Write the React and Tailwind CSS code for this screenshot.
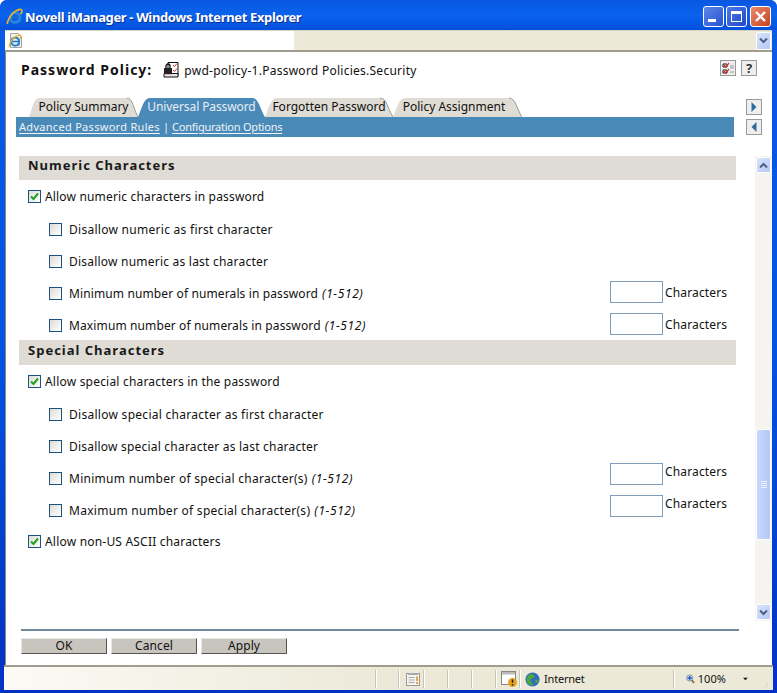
import React from "react";

const F = "font-['Noto_Sans','DejaVu_Sans',sans-serif]";

function Chevron({ up }) {
  return (
    <svg width="9" height="7" viewBox="0 0 9 7">
      <path d={up ? "M1 5.5 L4.5 2 L8 5.5" : "M1 1.5 L4.5 5 L8 1.5"} fill="none" stroke="#4d6185" strokeWidth="2" />
    </svg>
  );
}

function ScrollBtn({ up, className = "h-[16px]" }) {
  return (
    <div className={`w-[15px] rounded-[2px] border border-white bg-gradient-to-br from-[#dbe5fb] to-[#b4c8f6] flex items-center justify-center ${className}`}>
      <Chevron up={up} />
    </div>
  );
}

function IeGlyph() {
  return (
    <>
      <circle cx="8.5" cy="9" r="4.6" fill="none" stroke="#2a86d8" strokeWidth="2.6" />
      <path d="M5 8.8h7.5" stroke="#1c6fc4" strokeWidth="1.8" />
      <path d="M11 12.5h2.8" stroke="#2a86d8" strokeWidth="2" />
      <path d="M1.2 15C1.5 10 7 2.5 13 1.3c2.5-.4 2.6 2 .8 4.6" fill="none" stroke="#e8b22e" strokeWidth="1.5" />
    </>
  );
}

function IeIcon() {
  return (
    <svg width="17" height="17" viewBox="0 0 16 16">
      <IeGlyph />
    </svg>
  );
}

function IePageIcon() {
  return (
    <svg width="15" height="16" viewBox="0 0 15 16">
      <path d="M2.5 .5h8l3 3v11h-11z" fill="#f4f2ea" stroke="#a8a69c" />
      <g transform="translate(0 1) scale(.85)">
        <IeGlyph />
      </g>
    </svg>
  );
}

function Tab({ label, active, w, className = "" }) {
  return (
    <div className={`relative h-[20px] flex items-center justify-center ${w} ${className}`}>
      <svg className="absolute left-0 top-0 h-[20px] w-full" viewBox="0 0 100 20" preserveAspectRatio="none">
        <path d="M0 20 C3 12 4 2 9 1 L90 1 C95 1 96 12 100 20 Z" fill={active ? "#4a8ab8" : "#dfdcd5"} />
        {!active && (
          <path d="M90 1 C95 1 96 12 100 20" fill="none" stroke="#9c9a94" strokeWidth="1" vectorEffect="non-scaling-stroke" />
        )}
      </svg>
      <span className={`relative text-[12px] pb-[1px] ${active ? "text-[#e8eef4] tracking-[-0.1px]" : "text-[#111]"}`}>{label}</span>
    </div>
  );
}

function Section({ title, className = "h-[24px] pb-[4px]" }) {
  return (
    <div className={`bg-[#dfdcd5] pl-[9px] flex items-center text-[13px] font-bold tracking-[1px] text-[#1a1a1a] ${className}`}>
      {title}
    </div>
  );
}

function Box({ checked }) {
  return (
    <span className="w-[13px] h-[13px] mb-[2px] shrink-0 border border-[#1c5180] bg-gradient-to-br from-[#dcdcd7] to-white flex items-center justify-center">
      {checked && (
        <svg width="9" height="9" viewBox="0 0 9 9">
          <path d="M1 4.5 L3.5 7 L8 1.5" fill="none" stroke="#21a121" strokeWidth="2" />
        </svg>
      )}
    </span>
  );
}

function Row({ label, hint, indent, checked, input, track = "tracking-[0.28px]", className = "" }) {
  return (
    <div className={`flex items-center h-[20px] ${indent ? "pl-[30px]" : "pl-[9px]"} ${className}`}>
      <Box checked={checked} />
      <span className={`text-[12px] text-[#111] ${track} ${indent ? "ml-[7px]" : "ml-[4px]"}`}>
        {label}
        {hint && <em className="ml-[4px] tracking-[0.6px]">{hint}</em>}
      </span>
      {input === "a" && (
        <div className="ml-auto flex items-start w-[126px] h-[22px] mb-[4px]">
          <span className="w-[53px] h-[22px] border border-[#7f9db9] bg-white shrink-0" />
          <span className="ml-[2px] mt-[2px] text-[12px] tracking-[0.15px] text-[#111] leading-[20px]">Characters</span>
        </div>
      )}
      {input === "b" && (
        <div className="ml-auto flex items-start w-[126px] h-[22px] mb-[10px]">
          <span className="w-[53px] h-[22px] border border-[#7f9db9] bg-white shrink-0" />
          <span className="ml-[2px] text-[12px] tracking-[0.15px] text-[#111] leading-[18px]">Characters</span>
        </div>
      )}
    </div>
  );
}

function Btn({ children }) {
  return (
    <button className="w-[86px] h-[16px] bg-[#c8c5bf] border border-b-[#55544f] border-r-[#55544f] border-t-[#e8e6e1] border-l-[#e8e6e1] text-[12px] leading-[14px] text-[#111] tracking-[0.1px]">
      {children}
    </button>
  );
}

function Cell({ w, children, className = "" }) {
  return (
    <div className={`h-[18px] border-l border-[#c9c5b4] shadow-[inset_1px_0_0_#fff] flex items-center shrink-0 ${w} ${className}`}>
      {children}
    </div>
  );
}

export default function App() {
  return (
    <div className={`w-[777px] h-[693px] flex flex-col overflow-hidden rounded-t-[7px] bg-gradient-to-b from-[#0a5be6] via-[#0054e3] to-[#0331c4] ${F}`}>
      {/* title bar */}
      <div className="h-[30px] shrink-0 flex items-center pl-[6px] pr-[6px] bg-gradient-to-b from-[#0a57e0] via-[#0a63ee] to-[#0350dc]">
        <span className="mt-[2px]"><IeIcon /></span>
        <span className="ml-[2px] mt-[5px] text-[13px] font-bold text-white tracking-[-0.36px] [text-shadow:1px_1px_0_#0f2f8f]">
          Novell iManager - Windows Internet Explorer
        </span>
        <div className="ml-auto mt-[2px] flex gap-[2px]">
          <div className="w-[21px] h-[21px] rounded-[3px] border border-white bg-gradient-to-br from-[#5c86e8] to-[#2a52d0] flex items-end pl-[4px] pb-[4px]">
            <span className="w-[8px] h-[3px] bg-white" />
          </div>
          <div className="w-[21px] h-[21px] rounded-[3px] border border-white bg-gradient-to-br from-[#4a78e6] to-[#2348cc] flex items-center justify-center">
            <span className="w-[11px] h-[11px] border border-t-[3px] border-white" />
          </div>
          <div className="ml-[1px] w-[21px] h-[21px] rounded-[3px] border border-white bg-gradient-to-br from-[#e88a6a] to-[#c8401c] flex items-center justify-center">
            <svg width="13" height="13" viewBox="0 0 13 13">
              <path d="M2 2 L11 11 M11 2 L2 11" stroke="white" strokeWidth="2.4" />
            </svg>
          </div>
        </div>
      </div>

      {/* address bar */}
      <div className="h-[22px] shrink-0 ml-[5px] mr-[5px] bg-[#ece9d8] border-t border-[#d6d3c4] border-b-2 border-b-[#a09d8f] flex">
        <div className="w-[289px] bg-white flex items-center pl-[3px]">
          <IePageIcon />
        </div>
        <div className="ml-auto pr-[1px] flex items-center">
          <ScrollBtn className="h-[18px]" />
        </div>
      </div>

      {/* page */}
      <div className="flex-1 min-h-0 ml-[5px] mr-[5px] bg-white border-l border-[#8a887c] flex flex-col">
        {/* heading */}
        <div className="h-[45px] shrink-0 flex pt-[8px] pl-[15px] pr-[15px]">
          <span className="text-[14px] font-bold tracking-[1px] text-[#111] leading-[20px]">Password Policy:</span>
          <svg className="ml-[11px] mt-[2px]" width="16" height="16" viewBox="0 0 16 16">
            <path d="M5 .5h10v13H5z" fill="#fff" stroke="#111" />
            <path d="M1 11.5h14v3.5H1z" fill="#e8e8e8" stroke="#111" />
            <path d="M2 11.5h7" stroke="#d22" strokeWidth="1.4" />
            <rect x="1" y="6" width="8" height="6" fill="#222" />
            <path d="M3 6V4a2 2 0 0 1 4 0v2" fill="none" stroke="#111" strokeWidth="1.3" />
            <path d="M10 3l1.5 1.5L14 1.5M10 8l1.5 1.5L14 6.5" stroke="#d22" fill="none" />
          </svg>
          <span className="ml-[5px] text-[12px] tracking-[0.26px] text-[#111] leading-[21px]">pwd-policy-1.Password Policies.Security</span>
          <div className="ml-auto flex gap-[5px]">
            <div className="w-[16px] h-[16px] border border-[#999] bg-[#eee] flex items-center justify-center">
              <svg width="13" height="13" viewBox="0 0 13 13">
                <path d="M1 2h4v3H1zM1 8h4v3H1z" fill="none" stroke="#222" />
                <path d="M2 3l2 2 3-4M2 9l2 2 3-4" fill="none" stroke="#d8281c" strokeWidth="1.2" />
                <path d="M8 4h4M8 6h4M8 10h4" stroke="#999" />
              </svg>
            </div>
            <div className="w-[16px] h-[16px] border border-[#999] bg-[#eee] flex items-center justify-center text-[13px] font-bold leading-none text-[#333]">?</div>
          </div>
        </div>

        {/* tabs + nav */}
        <div className="h-[40px] shrink-0 flex pl-[10px] pr-[9px]">
          <div className="w-[718px] flex flex-col">
            <div className="h-[20px] flex pl-[13px]">
              <Tab label="Policy Summary" w="w-[109px]" />
              <Tab label="Universal Password" active w="w-[127px]" />
              <Tab label="Forgotten Password" w="w-[128px]" />
              <Tab label="Policy Assignment" w="w-[129px]" className="pr-[7px]" />
            </div>
            <div className="h-[20px] bg-[#4a8ab8] flex items-center pl-[3px] text-[11px] text-[#eef3f7]">
              <span className="underline underline-offset-2 tracking-[0.3px]">Advanced Password Rules</span>
              <span className="mx-[3px]">|</span>
              <span className="underline underline-offset-2 tracking-[-0.23px]">Configuration Options</span>
            </div>
          </div>
          <div className="ml-[12px] flex flex-col gap-[4px] mt-[2px]">
            <div className="w-[16px] h-[16px] border border-[#999] bg-[#eee] flex items-center justify-center">
              <svg width="8" height="12" viewBox="0 0 8 12"><path d="M1.5 1 L6.5 6 L1.5 11Z" fill="#2c6ba0" /></svg>
            </div>
            <div className="w-[16px] h-[16px] border border-[#999] bg-[#eee] flex items-center justify-center">
              <svg width="8" height="12" viewBox="0 0 8 12"><path d="M6.5 1 L1.5 6 L6.5 11Z" fill="#2c6ba0" /></svg>
            </div>
          </div>
        </div>

        {/* scroll area */}
        <div className="h-[465px] shrink-0 mt-[19px] flex">
          <div className="flex-1 pl-[13px]">
            <div className="w-[717px]">
              <Section title="Numeric Characters" />
              <Row label="Allow numeric characters in password" track="tracking-[0.17px]" checked className="mt-[7px]" />
              <Row label="Disallow numeric as first character" indent className="mt-[13px]" />
              <Row label="Disallow numeric as last character" track="tracking-[0.22px]" indent className="mt-[12px]" />
              <Row label="Minimum number of numerals in password" track="tracking-[0.12px]" hint="(1-512)" indent input="a" className="mt-[12px]" />
              <Row label="Maximum number of numerals in password" track="tracking-[0.12px]" hint="(1-512)" indent input="a" className="mt-[12px]" />
              <Section title="Special Characters" className="mt-[4px] h-[25px] pb-[3px]" />
              <Row label="Allow special characters in the password" track="tracking-[0.2px]" checked className="mt-[7px]" />
              <Row label="Disallow special character as first character" indent className="mt-[13px]" />
              <Row label="Disallow special character as last character" track="tracking-[0.21px]" indent className="mt-[12px]" />
              <Row label="Minimum number of special character(s)" hint="(1-512)" indent input="b" className="mt-[12px]" />
              <Row label="Maximum number of special character(s)" hint="(1-512)" indent input="b" className="mt-[12px]" />
              <Row label="Allow non-US ASCII characters" track="tracking-[0.2px]" checked className="mt-[11px]" />
            </div>
          </div>
          <div className="w-[17px] shrink-0 bg-[#f5f4ef] flex flex-col items-center pt-[1px] pb-[1px]">
            <ScrollBtn up />
            <div className="flex-1 flex flex-col justify-end pb-[64px]">
              <div className="w-[15px] h-[111px] rounded-[2px] border border-white bg-gradient-to-r from-[#c9d8fb] to-[#b4c8f6] flex flex-col items-center justify-center gap-[1px]">
                <span className="w-[6px] h-[1px] bg-[#eef3fe]" />
                <span className="w-[6px] h-[1px] bg-[#eef3fe]" />
                <span className="w-[6px] h-[1px] bg-[#eef3fe]" />
                <span className="w-[6px] h-[1px] bg-[#eef3fe]" />
              </div>
            </div>
            <ScrollBtn />
          </div>
        </div>

        {/* footer */}
        <div className="flex-1 min-h-0 pl-[15px] pt-[8px] bg-white">
          <div className="w-[718px] h-[2px] bg-[#6f8b9d]" />
          <div className="mt-[7px] flex gap-[4px]">
            <Btn>OK</Btn>
            <Btn>Cancel</Btn>
            <Btn>Apply</Btn>
          </div>
        </div>
      </div>

      {/* status bar */}
      <div className="h-[25px] shrink-0 ml-[4px] mr-[4px] mb-[3px] border-t-2 border-[#a09d8f] bg-gradient-to-r from-[#fbfaf5] via-[#ece9d8] to-[#ece9d8] flex items-center pl-[371px] pt-[1px]">
        <Cell w="w-[23px]" />
        <Cell w="w-[25px]" className="pl-[7px]">
          <svg width="14" height="13" viewBox="0 0 14 13">
            <rect x=".5" y=".5" width="13" height="12" fill="#f5f4ef" stroke="#999" />
            <path d="M2 1h10" stroke="#aaa" strokeWidth="2" />
            <path d="M2.5 4.5h6M2.5 7h6M2.5 9.5h6" stroke="#aaa" />
            <path d="M11 3.5v4.5M11 9v2" stroke="#e08a1c" strokeWidth="1.5" />
          </svg>
        </Cell>
        <Cell w="w-[24px]" />
        <Cell w="w-[24px]" />
        <Cell w="w-[24px]" />
        <Cell w="w-[24px]" className="pl-[5px]">
          <svg width="17" height="17" viewBox="0 0 17 17">
            <rect x=".5" y=".5" width="14" height="13" fill="#fff" stroke="#888" />
            <rect x="1" y="1" width="13" height="2.5" fill="#bbb" />
            <circle cx="11.5" cy="11.5" r="4.5" fill="#e8a020" />
            <path d="M11.5 8.5v3.2M11.5 13v1.5" stroke="#222" strokeWidth="1.5" />
          </svg>
        </Cell>
        <Cell w="w-[154px]" className="pl-[5px]">
          <svg width="15" height="15" viewBox="0 0 16 16">
            <circle cx="8" cy="8" r="7.5" fill="#2f6fb8" />
            <path d="M5 2c3 0 5 1 5 3S7 6 6 8s2 5 4 6c-4 1-7-1-8-4s1-6 3-8z" fill="#4fa83d" />
            <path d="M11 8c2 0 3 1 3 2s-2 2-3 1z" fill="#4fa83d" />
          </svg>
          <span className="ml-[4px] text-[11px] tracking-[-0.2px] text-[#111]">Internet</span>
        </Cell>
        <Cell w="w-[95px]" className="pl-[12px]">
          <svg width="13" height="14" viewBox="0 0 13 14">
            <circle cx="5.5" cy="5.5" r="4.5" fill="#cfe0f8" stroke="#5c6c88" />
            <path d="M2.5 5.5h6M5.5 2.5v6" stroke="#1c5cc0" strokeWidth="2" />
            <path d="M8.5 9 L12 13" stroke="#8a5a24" strokeWidth="2.2" />
          </svg>
          <span className="ml-[3px] text-[11px] text-[#111]">100%</span>
          <svg className="ml-[17px]" width="7" height="4" viewBox="0 0 7 4"><path d="M0 0h7L3.5 4z" fill="#111" /></svg>
          <svg className="ml-[15px] mt-[10px]" width="8" height="8" viewBox="0 0 8 8">
            <path d="M6 1h1v1H6zM3 4h1v1H3zM6 4h1v1H6zM0 7h1v1H0zM3 7h1v1H3zM6 7h1v1H6z" fill="#b8b4a4" />
          </svg>
        </Cell>
      </div>
    </div>
  );
}
